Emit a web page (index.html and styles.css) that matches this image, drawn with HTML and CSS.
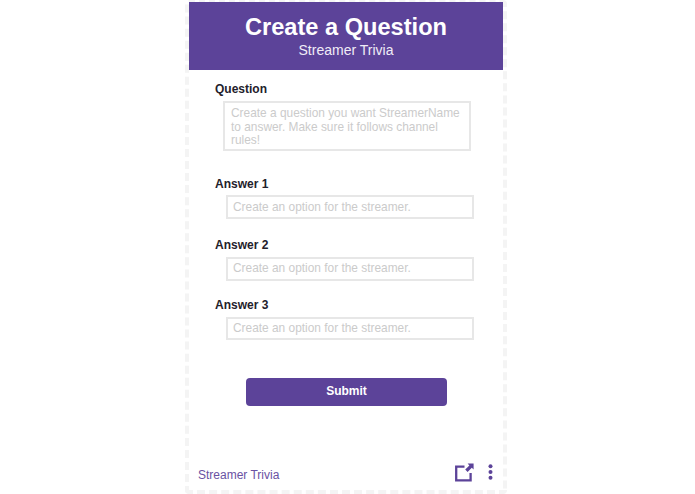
FILE: index.html
```html
<!DOCTYPE html>
<html lang="en">
<head>
<meta charset="utf-8">
<title>Create a Question</title>
<link rel="stylesheet" href="styles.css">
</head>
<body>
<main class="panel">
  <header class="header">
    <h1 class="title">Create a Question</h1>
    <p class="subtitle">Streamer Trivia</p>
  </header>
  <form class="form">
    <div class="field field-question">
      <div class="label">Question</div>
      <div class="box box-question">Create a question you want StreamerName to answer. Make sure it follows channel rules!</div>
    </div>
    <div class="field field-a1">
      <div class="label">Answer 1</div>
      <div class="box box-answer box-first">Create an option for the streamer.</div>
    </div>
    <div class="field field-a2">
      <div class="label">Answer 2</div>
      <div class="box box-answer">Create an option for the streamer.</div>
    </div>
    <div class="field field-a3">
      <div class="label">Answer 3</div>
      <div class="box box-answer box-short">Create an option for the streamer.</div>
    </div>
    <div class="submit">Submit</div>
  </form>
  <footer class="footer">
    <span class="brand">Streamer Trivia</span>
    <div class="actions">
      <svg class="icon-popout" width="19" height="19" viewBox="0 0 19 19" aria-hidden="true">
        <path d="M9.5 3.6H1.2V17.4H15.6V10" fill="none" stroke="#5c4399" stroke-width="2.3"/>
        <path d="M12.6 0.4H18.6V6.4L16.8 4.8L12.6 9L10.2 6.6L14.4 2.4Z" fill="#5c4399"/>
      </svg>
      <svg class="icon-more" width="5" height="16" viewBox="0 0 5 16" aria-hidden="true">
        <circle cx="2.5" cy="2.2" r="2" fill="#5c4399"/>
        <circle cx="2.5" cy="8" r="2" fill="#5c4399"/>
        <circle cx="2.5" cy="13.8" r="2" fill="#5c4399"/>
      </svg>
    </div>
  </footer>
</main>
</body>
</html>
```
FILE: styles.css
```css
* { box-sizing: border-box; }
html, body { height: 100%; }
body {
  margin: 0;
  background: #fff;
  font-family: "Liberation Sans", Arial, sans-serif;
  display: flex;
  justify-content: center;
}
.panel {
  width: 322px;
  height: 494px;
  margin-right: 3px;
  border: 4px dashed #f4f4f4;
  border-top-width: 2px;
  border-radius: 4px;
  display: flex;
  flex-direction: column;
}
.header {
  height: 68px;
  background: #5c4399;
  color: #fff;
  text-align: center;
  padding-top: 11px;
}
.title {
  margin: 0;
  font-size: 23.6px;
  line-height: 29px;
  font-weight: 700;
}
.subtitle {
  margin: 0;
  font-size: 14px;
  line-height: 17px;
  color: #f0ecf7;
}
.form {
  flex: 1;
  padding-left: 26px;
  display: flex;
  flex-direction: column;
}
.label {
  font-size: 12px;
  line-height: 15px;
  font-weight: 700;
  color: #23212b;
}
.field-question { margin-top: 12px; }
.field-a1 { margin-top: 26px; }
.field-a2 { margin-top: 19px; }
.field-a3 { margin-top: 17px; }
.box {
  border: 2px solid #e7e7e7;
  color: #cbcbcb;
  font-size: 11.9px;
  line-height: 13.5px;
}
.box-question {
  width: 248px;
  height: 50px;
  margin: 4px 0 0 8px;
  padding: 4px 6px 0 6px;
}
.box-answer {
  width: 248px;
  height: 24px;
  margin: 4px 0 0 11px;
  padding: 3px 5px 0 5px;
}
.box-first { margin-top: 3px; padding-top: 4px; }
.box-short { height: 23px; }
.submit {
  width: 201px;
  height: 28px;
  margin: 38px 0 0 31px;
  background: #5c4399;
  border-radius: 4px;
  color: #fff;
  font-size: 12px;
  font-weight: 700;
  line-height: 26px;
  text-align: center;
}
.footer {
  display: flex;
  align-items: center;
  justify-content: space-between;
  height: 36px;
  padding: 0 10px 0 9px;
}
.brand {
  font-size: 12px;
  color: #6a52a3;
  margin-top: 6px;
}
.actions {
  display: flex;
  align-items: center;
  gap: 14px;
}
```
